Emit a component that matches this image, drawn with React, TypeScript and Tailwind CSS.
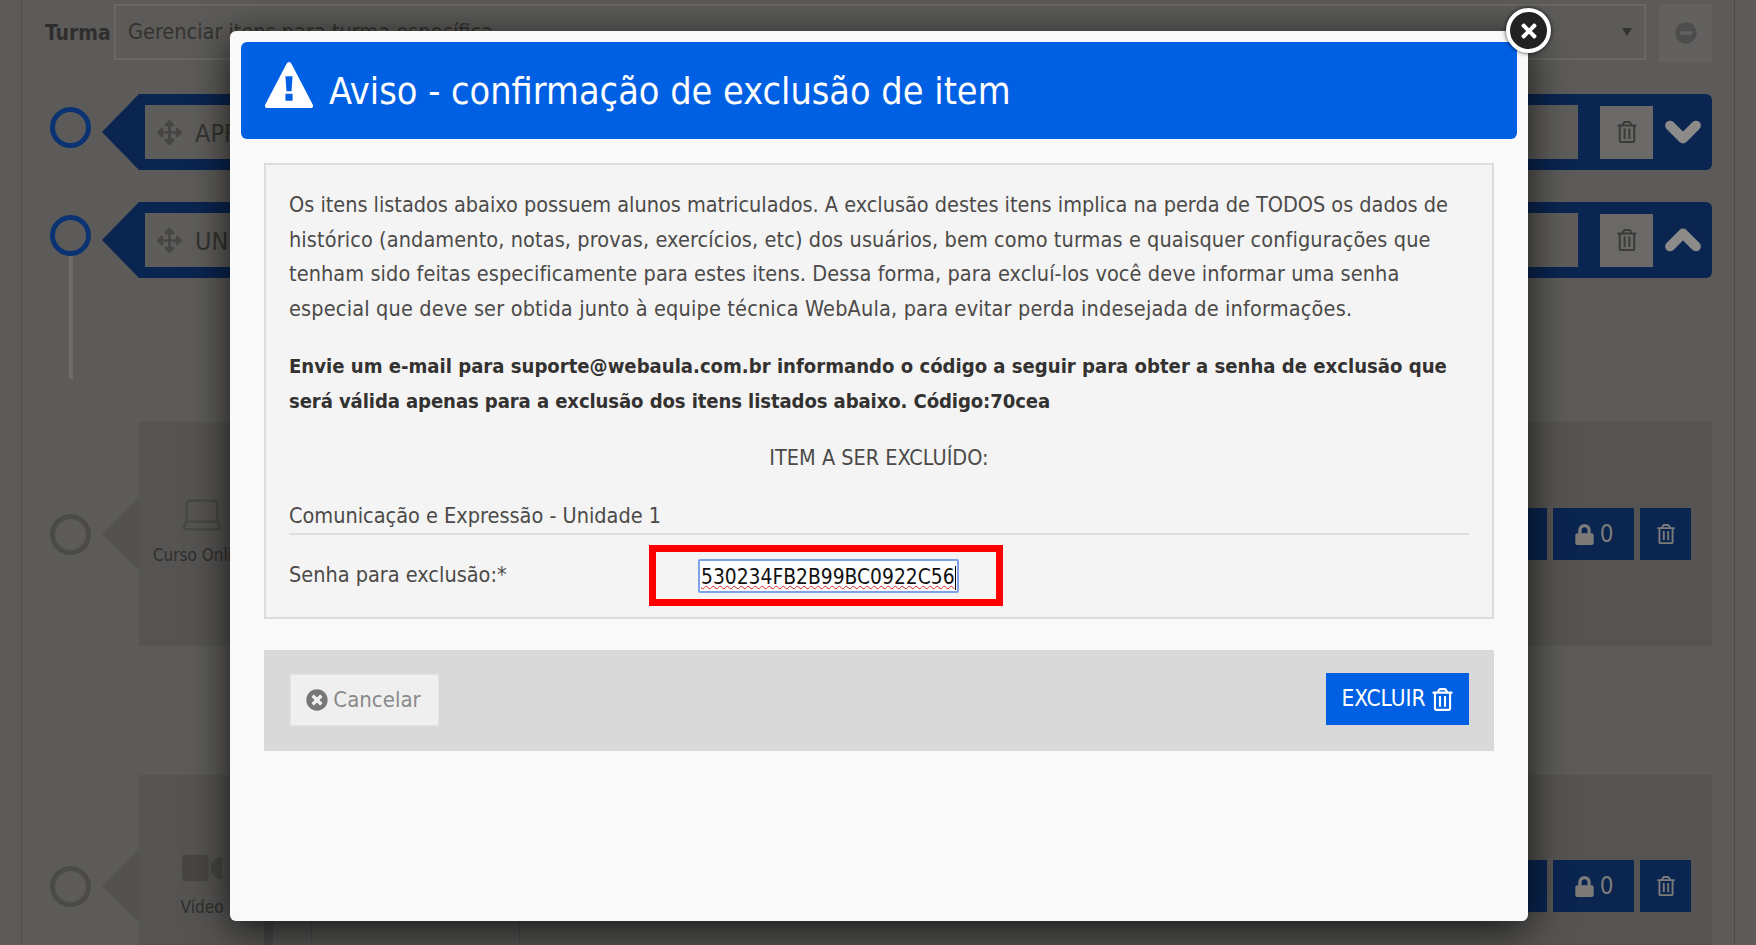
import { ChevronDown, ChevronUp, Laptop } from 'lucide-react'
import {
  FaArrowsAlt,
  FaLock,
  FaMinusCircle,
  FaPencilAlt,
  FaRegTrashAlt,
  FaTimes,
  FaTimesCircle,
  FaVideo,
} from 'react-icons/fa'

function Banner({ label, open, line }: { label: string; open: boolean; line?: boolean }) {
  return (
    <div className="flex h-[76px]">
      <div className="flex w-[60px] shrink-0 flex-col items-start pl-[8px] pt-[13px]">
        <div className="h-[41px] w-[41px] shrink-0 rounded-full border-[5px] border-[#0b3272]" />
        {line && <div className="ml-[19px] h-[123px] w-[4px] shrink-0 bg-[#6d6c6a]" />}
      </div>
      <div className="h-[76px] w-[37px] bg-[#0a2550] [clip-path:polygon(100%_0,100%_100%,0_50%)]" />
      <div className="flex flex-1 items-center rounded-r-md bg-[#0a2550] pl-[6px]">
        <div className="flex h-[54px] w-[1433px] items-center gap-[13px] bg-[#5e5d5b] pl-[12px] text-[25px] text-[#35332f]">
          <FaArrowsAlt className="text-[25px] text-[#474645]" />
          <span className="pt-[3px]">{label}</span>
        </div>
        <div className="ml-[22px] flex h-[53px] w-[53px] items-center justify-center bg-[#6a6967]">
          <FaRegTrashAlt className="text-[22px] text-[#3c3b3a]" />
        </div>
        <div className="flex flex-1 items-center justify-center text-[#8c8b89]">
          {open ? <ChevronUp size={52} strokeWidth={4.5} /> : <ChevronDown size={52} strokeWidth={4.5} />}
        </div>
      </div>
    </div>
  )
}

function ContentCard({ kind, height }: { kind: 'curso' | 'video'; height: string }) {
  const btn = 'flex h-[52px] items-center justify-center bg-[#0a2550] text-[#7c7b79]'
  return (
    <div className="flex items-center">
      <div className="flex w-[60px] shrink-0 pl-[8px]">
        <div className="h-[41px] w-[41px] rounded-full border-[5px] border-[#4b4a48]" />
      </div>
      <div className="h-[73px] w-[37px] bg-[#535250] [clip-path:polygon(100%_0,100%_100%,0_50%)]" />
      <div className={`relative flex flex-1 items-center bg-[#555452] ${height}`}>
        {kind === 'curso' ? (
          <div className="mb-[8px] flex w-[126px] flex-col items-center text-[#302f2e]">
            <Laptop size={46} strokeWidth={1.2} className="text-[#474644]" />
            <span className="mt-[6px] whitespace-nowrap text-[17px]">Curso Online</span>
          </div>
        ) : (
          <div className="mb-[3px] flex w-[126px] flex-col items-center text-[#302f2e]">
            <FaVideo className="text-[40px] text-[#474644]" />
            <span className="mt-[7px] whitespace-nowrap text-[17px]">Vídeo</span>
          </div>
        )}
        <div className="ml-auto flex items-center gap-[6px] pr-[21px]">
          <div className={`${btn} w-[60px]`}>
            <FaPencilAlt className="text-[20px]" />
          </div>
          <div className={`${btn} w-[81px] gap-[5px] text-[24px]`}>
            <FaLock className="text-[21px]" />
            <span>0</span>
          </div>
          <div className={`${btn} w-[51px]`}>
            <FaRegTrashAlt className="text-[20px]" />
          </div>
        </div>
        {kind === 'video' && (
          <div className="absolute left-[125px] top-[146px] flex h-[30px]">
            <div className="w-[9px] bg-[#4a4948]" />
            <div className="w-[38px]" />
            <div className="w-[209px] border-x border-[#4a4948]" />
          </div>
        )}
      </div>
    </div>
  )
}

function Background() {
  return (
    <div className="mx-[21px] h-[945px] overflow-hidden border-x border-[#4d4c4a] pl-[20px] pr-[22px]">
      <div className="flex h-[94px] items-start pt-[4px]">
        <span className="ml-[3px] mt-[14px] w-[69px] text-[21px] font-bold text-[#2f2e2d]">Turma</span>
        <div className="flex h-[56px] flex-1 items-center justify-between border-2 border-[#686765] px-[12px] text-[21.5px] text-[#35332f]">
          <span className="pt-[1px]">Gerenciar itens para turma específica</span>
          <div className="h-0 w-0 border-x-[5px] border-t-[8px] border-x-transparent border-t-[#333231]" />
        </div>
        <div className="ml-[13px] flex h-[58px] w-[53px] items-center justify-center bg-[#626160]">
          <FaMinusCircle className="text-[22px] text-[#4e4d4b]" />
        </div>
      </div>
      <Banner label="APRESENTAÇÃO" open={false} />
      <div className="mt-[32px]">
        <Banner label="UNIDADE 1" open line />
      </div>
      <div className="mt-[144px]">
        <ContentCard kind="curso" height="h-[224px]" />
      </div>
      <div className="mt-[129px]">
        <ContentCard kind="video" height="h-[222px]" />
      </div>
    </div>
  )
}

function Modal() {
  return (
    <div className="absolute left-[230px] top-[31px] h-[890px] w-[1298px] rounded-md bg-[#f9f9f9] px-[11px] pt-[11px] shadow-[0_8px_40px_rgba(0,0,0,0.75)]">
      <button className="absolute -right-[23px] -top-[23px] z-10 flex h-[45px] w-[45px] items-center justify-center rounded-full border-[4px] border-white bg-[#222222] text-white shadow-[0_0_4px_rgba(0,0,0,0.8)]">
        <FaTimes className="text-[22px]" />
      </button>

      <div className="flex h-[97px] items-center gap-[15px] rounded-md bg-[#0060e3] pl-[23px] text-white">
        {/* taller than the FA triangle */}
        <svg viewBox="0 0 48 47" className="mb-[11px] h-[48px] w-[50px] shrink-0" fill="currentColor">
          <path
            fillRule="evenodd"
            d="M24 1Q25.5 1 26.5 3L47.2 42.5Q48.6 46 45 46L3 46Q-.6 46 .8 42.5L21.5 3Q22.5 1 24 1ZM20.5 15L21.5 29.5L26.5 29.5L27.5 15ZM20.5 32L20.5 39L27.5 39L27.5 32Z"
          />
        </svg>
        <h1 className="pt-[2px] text-[37.5px] leading-none">Aviso - confirmação de exclusão de item</h1>
      </div>

      <div className="mx-[23px] mt-[24px]">
        <div className="h-[456px] border-2 border-[#dcdcdc] bg-[#f4f4f4] px-[23px] pt-[23px] text-[21.5px] leading-[34.5px] text-[#4b4a48]">
          <div className="whitespace-nowrap">
            <p className="tracking-[-0.02px]">Os itens listados abaixo possuem alunos matriculados. A exclusão destes itens implica na perda de TODOS os dados de</p>
            <p className="tracking-[0.1px]">histórico (andamento, notas, provas, exercícios, etc) dos usuários, bem como turmas e quaisquer configurações que</p>
            <p className="tracking-[0.08px]">tenham sido feitas especificamente para estes itens. Dessa forma, para excluí-los você deve informar uma senha</p>
            <p className="tracking-[0.17px]">especial que deve ser obtida junto à equipe técnica WebAula, para evitar perda indesejada de informações.</p>
          </div>
          <div className="mt-[23px] whitespace-nowrap text-[20.1px] font-bold text-[#333231]">
            <p>Envie um e-mail para suporte@webaula.com.br informando o código a seguir para obter a senha de exclusão que</p>
            <p className="tracking-[-0.1px]">será válida apenas para a exclusão dos itens listados abaixo. Código:70cea</p>
          </div>
          <p className="mt-[23px] text-center">ITEM A SER EXCLUÍDO:</p>
          <p className="mt-[23px] border-b-2 border-[#dedede]">Comunicação e Expressão - Unidade 1</p>
          <div className="mt-[10px] flex items-start">
            <label className="w-[360px] pt-[13px]">Senha para exclusão:*</label>
            <div className="flex h-[61px] w-[354px] items-center border-[7px] border-[#ff0000] pl-[42px]">
              <div className="flex h-[34px] w-[261px] items-center rounded-[2px] border-2 border-[#7da2e8] bg-white pl-[1px] pt-[4px] text-[20.8px] leading-none text-[#111111]">
                <span className="underline decoration-[#e02020] decoration-wavy decoration-1 underline-offset-1">530234FB2B99BC0922C56</span>
                <span className="h-[24px] w-px shrink-0 bg-black" />
              </div>
            </div>
          </div>
        </div>

        <div className="mt-[31px] flex h-[101px] items-center justify-between bg-[#d9d9d9] pb-[2px] pl-[26px] pr-[25px]">
          <button className="flex h-[52px] w-[149px] items-center justify-center gap-[5px] border border-[#e4e4e4] bg-[#efefef] pr-[2px] text-[22px] text-[#8a8a8a]">
            <FaTimesCircle className="text-[22px] text-[#777777]" />
            Cancelar
          </button>
          <button className="mb-[1px] flex h-[52px] w-[143px] items-center justify-center gap-[5px] bg-[#0060e3] text-[22.5px] text-white">
            EXCLUIR
            <FaRegTrashAlt className="text-[23px]" />
          </button>
        </div>
      </div>
    </div>
  )
}

export default function App() {
  return (
    <div className="relative h-[945px] w-[1756px] overflow-hidden bg-[#5c5b59] font-['DejaVu_Sans_Condensed','DejaVu_Sans',sans-serif] [font-stretch:condensed]">
      <Background />
      <Modal />
    </div>
  )
}
